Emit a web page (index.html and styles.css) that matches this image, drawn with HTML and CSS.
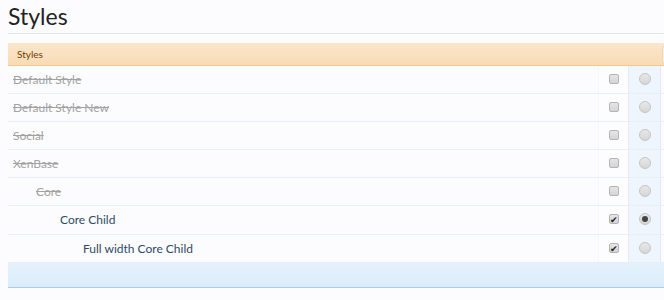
FILE: index.html
```html
<!DOCTYPE html>
<html lang="en">
  <head>
    <meta charset="UTF-8" />
    <title>Styles</title>
    <link rel="stylesheet" href="styles.css">
  </head>
  <body>
    <div class="page">
        <h1 class="title">Styles</h1>

        <div class="style-list">
            <div class="list-head">
                <span class="head-label">Styles</span>
                <span class="head-extra"></span>
            </div>

            <div class="style-row">
                <span class="style-name disabled level-0">Default Style</span>
                <span class="cell-check"><span class="checkbox"></span></span>
                <span class="cell-radio"><span class="radio"></span></span>
                <span class="cell-more"></span>
            </div>
            <div class="style-row">
                <span class="style-name disabled level-0">Default Style New</span>
                <span class="cell-check"><span class="checkbox"></span></span>
                <span class="cell-radio"><span class="radio"></span></span>
                <span class="cell-more"></span>
            </div>
            <div class="style-row">
                <span class="style-name disabled level-0">Social</span>
                <span class="cell-check"><span class="checkbox"></span></span>
                <span class="cell-radio"><span class="radio"></span></span>
                <span class="cell-more"></span>
            </div>
            <div class="style-row">
                <span class="style-name disabled level-0">XenBase</span>
                <span class="cell-check"><span class="checkbox"></span></span>
                <span class="cell-radio"><span class="radio"></span></span>
                <span class="cell-more"></span>
            </div>
            <div class="style-row">
                <span class="style-name disabled level-1">Core</span>
                <span class="cell-check"><span class="checkbox"></span></span>
                <span class="cell-radio"><span class="radio"></span></span>
                <span class="cell-more"></span>
            </div>
            <div class="style-row">
                <span class="style-name level-2">Core Child</span>
                <span class="cell-check"><span class="checkbox checked">&#10004;</span></span>
                <span class="cell-radio"><span class="radio selected"></span></span>
                <span class="cell-more"></span>
            </div>
            <div class="style-row">
                <span class="style-name level-3">Full width Core Child</span>
                <span class="cell-check"><span class="checkbox checked">&#10004;</span></span>
                <span class="cell-radio"><span class="radio"></span></span>
                <span class="cell-more"></span>
            </div>

            <div class="list-foot"></div>
        </div>
    </div>
  </body>
</html>
```

FILE: styles.css
```css
* {
    margin: 0;
    padding: 0;
    box-sizing: border-box;
}

body {
    font-family: Lato, "Open Sans", sans-serif;
    background: #fcfcff;
    overflow: hidden;
}

.page {
    padding-left: 8px;
    width: 674px;
}

.title {
    font-size: 23px;
    font-weight: normal;
    color: #222;
    line-height: 28px;
    padding-top: 2px;
    padding-bottom: 3px;
    border-bottom: 1px solid #e1e5ec;
    margin-bottom: 9px;
}

.list-head {
    display: flex;
    height: 23px;
    align-items: center;
    background: linear-gradient(to bottom, #fbe6cb, #f8dbb5);
    border-bottom: 1px solid #f2c88f;
}

.head-label {
    flex: 1;
    font-size: 10px;
    color: #6d3f03;
    padding-left: 9px;
}

.head-extra {
    width: 12px;
    height: 17px;
    border: 1px solid #efd8b8;
    background: #fcefdc;
    border-radius: 2px;
}

.style-row {
    display: flex;
    height: 28px;
    border-bottom: 1px solid #e8eef4;
    background: #fcfcff;
}

.style-row:nth-child(7) {
    height: 29px;
}

.style-name {
    flex: 1;
    font-size: 12px;
    line-height: 27px;
    color: #2f4b62;
}

.style-name.disabled {
    color: #a2a2a2;
    text-decoration: line-through;
}

.level-0 { padding-left: 5px; }
.level-1 { padding-left: 28px; }
.level-2 { padding-left: 52px; }
.level-3 { padding-left: 75px; }

.cell-check {
    width: 31px;
    display: flex;
    align-items: center;
    justify-content: center;
    background: #fdfdff;
    border-left: 1px solid #f3f6fa;
    border-right: 1px solid #e3edf6;
}

.checkbox {
    width: 10px;
    height: 10px;
    border: 1px solid #b4b4b4;
    border-radius: 2px;
    background: linear-gradient(to bottom, #e6e6e6, #d4d4d4);
    font-size: 9px;
    line-height: 9px;
    color: #222;
    text-align: center;
    margin-top: -2px;
}

.cell-radio {
    width: 32px;
    display: flex;
    align-items: center;
    justify-content: center;
    background: #eef5fc;
    border-right: 1px solid #e0ebf5;
}

.cell-more {
    width: 13px;
}

.radio {
    width: 12px;
    height: 12px;
    border: 1px solid #c4c4c4;
    border-radius: 50%;
    background: linear-gradient(to bottom, #e8e8e8, #d6d6d6);
    margin-top: -2px;
    position: relative;
}

.radio.selected::after {
    content: '';
    position: absolute;
    top: 2px;
    left: 2px;
    width: 6px;
    height: 6px;
    border-radius: 50%;
    background: #444;
}

.list-foot {
    height: 25px;
    background: linear-gradient(to bottom, #e3f1fc, #dcedfa);
    border-bottom: 1px solid #a9cde6;
}
```
